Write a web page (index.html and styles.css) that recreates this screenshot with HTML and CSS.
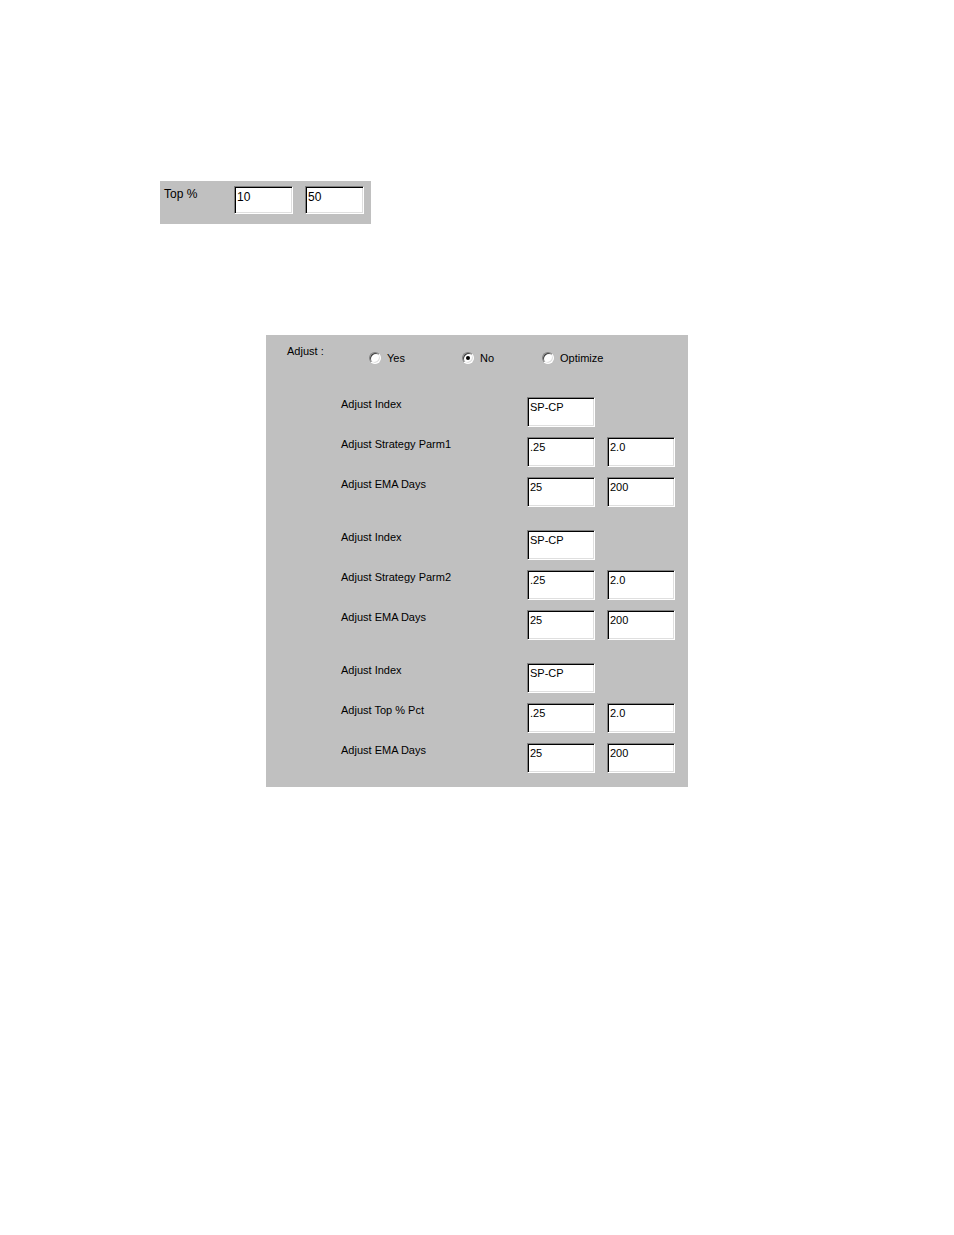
FILE: index.html
```html
<!DOCTYPE html>
<html>
<head>
<meta charset="utf-8">
<link rel="stylesheet" href="styles.css">
</head>
<body>
<div class="page">
  <div class="top-panel">
    <span class="top-label">Top %</span>
    <div class="field top-field">10</div>
    <div class="field top-field">50</div>
  </div>

  <div class="adjust-panel">
    <div class="adjust-head">
      <span class="adjust-label">Adjust :</span>
      <div class="radios">
        <label class="radio r-yes"><span class="dot"></span>Yes</label>
        <label class="radio r-no"><span class="dot checked"></span>No</label>
        <label class="radio r-opt"><span class="dot"></span>Optimize</label>
      </div>
    </div>

    <div class="group">
      <div class="row"><span class="lbl">Adjust Index</span><div class="field">SP-CP</div></div>
      <div class="row"><span class="lbl">Adjust Strategy Parm1</span><div class="field">.25</div><div class="field">2.0</div></div>
      <div class="row"><span class="lbl">Adjust EMA Days</span><div class="field">25</div><div class="field">200</div></div>
    </div>

    <div class="group">
      <div class="row"><span class="lbl">Adjust Index</span><div class="field">SP-CP</div></div>
      <div class="row"><span class="lbl">Adjust Strategy Parm2</span><div class="field">.25</div><div class="field">2.0</div></div>
      <div class="row"><span class="lbl">Adjust EMA Days</span><div class="field">25</div><div class="field">200</div></div>
    </div>

    <div class="group">
      <div class="row"><span class="lbl">Adjust Index</span><div class="field">SP-CP</div></div>
      <div class="row"><span class="lbl">Adjust Top % Pct</span><div class="field">.25</div><div class="field">2.0</div></div>
      <div class="row"><span class="lbl">Adjust EMA Days</span><div class="field">25</div><div class="field">200</div></div>
    </div>
  </div>
</div>
</body>
</html>
```

FILE: styles.css
```css
html, body {
  margin: 0;
  padding: 0;
  background: #ffffff;
}

body {
  font-family: "Liberation Sans", Arial, sans-serif;
  color: #000;
}

.page {
  padding-top: 181px;
  width: 954px;
  height: 1235px;
  box-sizing: border-box;
}

.field {
  box-sizing: border-box;
  width: 68px;
  height: 30px;
  background: #ffffff;
  border-style: solid;
  border-width: 1px;
  border-color: #808080 #ffffff #ffffff #808080;
  box-shadow: inset 1px 1px 0 #000000, inset -1px -1px 0 #dfdfdf;
  padding: 3px 0 0 2px;
  font-size: 11px;
  line-height: 13px;
  white-space: nowrap;
}

/* top panel */
.top-panel {
  margin-left: 160px;
  width: 211px;
  height: 43px;
  background: #c0c0c0;
  box-sizing: border-box;
  display: flex;
  align-items: flex-start;
  padding: 5px 0 0 4px;
  gap: 12px;
}

.top-label {
  font-size: 12px;
  line-height: 15px;
  width: 58px;
  flex: none;
  padding-top: 1px;
}

.top-field {
  flex: none;
  width: 59px;
  height: 28px;
  font-size: 12px;
  line-height: 14px;
}

/* adjust panel */
.adjust-panel {
  margin-top: 111px;
  margin-left: 266px;
  width: 422px;
  height: 452px;
  box-sizing: border-box;
  background: #c0c0c0;
  padding: 9px 0 0 0;
  font-size: 11px;
}

.adjust-head {
  display: flex;
  align-items: flex-start;
  height: 53px;
}

.adjust-label {
  margin-left: 21px;
  width: 82px;
  line-height: 14px;
}

.radios {
  display: flex;
  padding-top: 7px;
}

.radio {
  display: flex;
  align-items: center;
  line-height: 14px;
}

.r-yes { width: 93px; }
.r-no { width: 80px; }

.dot {
  box-sizing: border-box;
  width: 12px;
  height: 12px;
  border-radius: 50%;
  background: #ffffff;
  border: 1px solid;
  border-color: #808080 #ffffff #ffffff #808080;
  box-shadow: inset 1px 1px 0 #404040, inset -1px -1px 0 #dfdfdf;
  margin-right: 6px;
  position: relative;
}

.dot.checked::after {
  content: "";
  position: absolute;
  left: 3px;
  top: 3px;
  width: 4px;
  height: 4px;
  border-radius: 50%;
  background: #000;
}

.group {
  display: flex;
  flex-direction: column;
  gap: 10px;
  margin-bottom: 23px;
  padding-left: 75px;
}

.row {
  display: grid;
  grid-template-columns: 174px 68px 68px;
  column-gap: 12px;
  align-items: start;
}

.lbl {
  line-height: 14px;
}
```
